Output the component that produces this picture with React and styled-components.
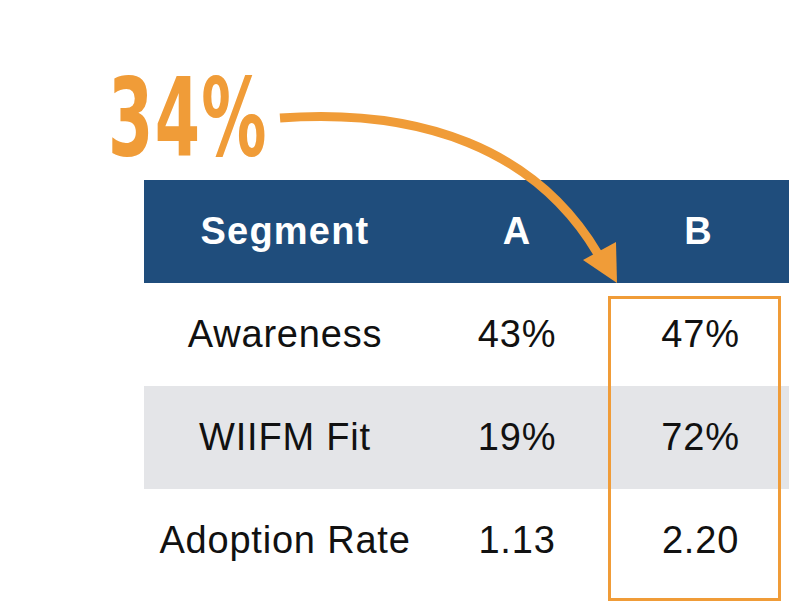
import React from "react";
import styled, { createGlobalStyle } from "styled-components";

const ORANGE = "#f09c38";
const NAVY = "#1f4d7c";

const GlobalStyle = createGlobalStyle`
  html, body {
    margin: 0;
    padding: 0;
    background: #fff;
  }
  body {
    font-family: "Liberation Sans", Arial, sans-serif;
  }
`;

const Page = styled.div`
  position: relative;
  width: 789px;
  height: 602px;
  overflow: hidden;
  background: #fff;
`;

const BigStat = styled.div`
  position: relative;
  height: 180px;
  padding-left: 108px;
  box-sizing: border-box;
`;

const StatText = styled.span`
  display: inline-block;
  margin-top: 64px;
  font-family: "Liberation Sans Narrow", "DejaVu Sans Condensed", sans-serif;
  font-weight: 700;
  font-size: 108px;
  line-height: 1;
  color: ${ORANGE};
  transform: scaleX(0.67);
  transform-origin: left top;
  letter-spacing: 2px;
`;

const Table = styled.div`
  position: relative;
  margin-left: 144px;
  display: grid;
  grid-template-columns: 282px 182px 1fr;
`;

const Cell = styled.div`
  height: 103px;
  display: flex;
  align-items: center;
  justify-content: center;
  font-size: 38px;
  letter-spacing: ${(p) => (p.$head ? "1.2px" : "0.8px")};
  color: ${(p) => (p.$head ? "#fff" : "#111")};
  font-weight: ${(p) => (p.$head ? 700 : 400)};
  background: ${(p) => (p.$head ? NAVY : p.$shade ? "#e4e5e8" : "transparent")};
  padding-left: ${(p) => (p.$shift ? "4px" : "0")};
`;

const Highlight = styled.div`
  position: absolute;
  left: 464px;
  top: 116px;
  width: 173px;
  height: 305px;
  border: 3px solid ${ORANGE};
  box-sizing: border-box;
  pointer-events: none;
`;

const ArrowLayer = styled.svg`
  position: absolute;
  left: 0;
  top: 0;
  pointer-events: none;
`;

const rows = [
  ["Awareness", "43%", "47%"],
  ["WIIFM Fit", "19%", "72%"],
  ["Adoption Rate", "1.13", "2.20"],
];

export default function App() {
  return (
    <Page>
      <GlobalStyle />
      <BigStat>
        <StatText>34%</StatText>
      </BigStat>
      <Table>
        <Cell $head>Segment</Cell>
        <Cell $head>A</Cell>
        <Cell $head>B</Cell>
        {rows.map((r, i) => (
          <React.Fragment key={r[0]}>
            <Cell $shade={i === 1}>{r[0]}</Cell>
            <Cell $shade={i === 1}>{r[1]}</Cell>
            <Cell $shade={i === 1} $shift>{r[2]}</Cell>
          </React.Fragment>
        ))}
        <Highlight />
      </Table>
      <ArrowLayer width="789" height="602" viewBox="0 0 789 602">
        <path
          d="M 280 118 C 420 108, 535 148, 598 254"
          fill="none"
          stroke={ORANGE}
          strokeWidth="9"
        />
        <polygon points="617,283 583,260 616,242" fill={ORANGE} />
      </ArrowLayer>
    </Page>
  );
}
